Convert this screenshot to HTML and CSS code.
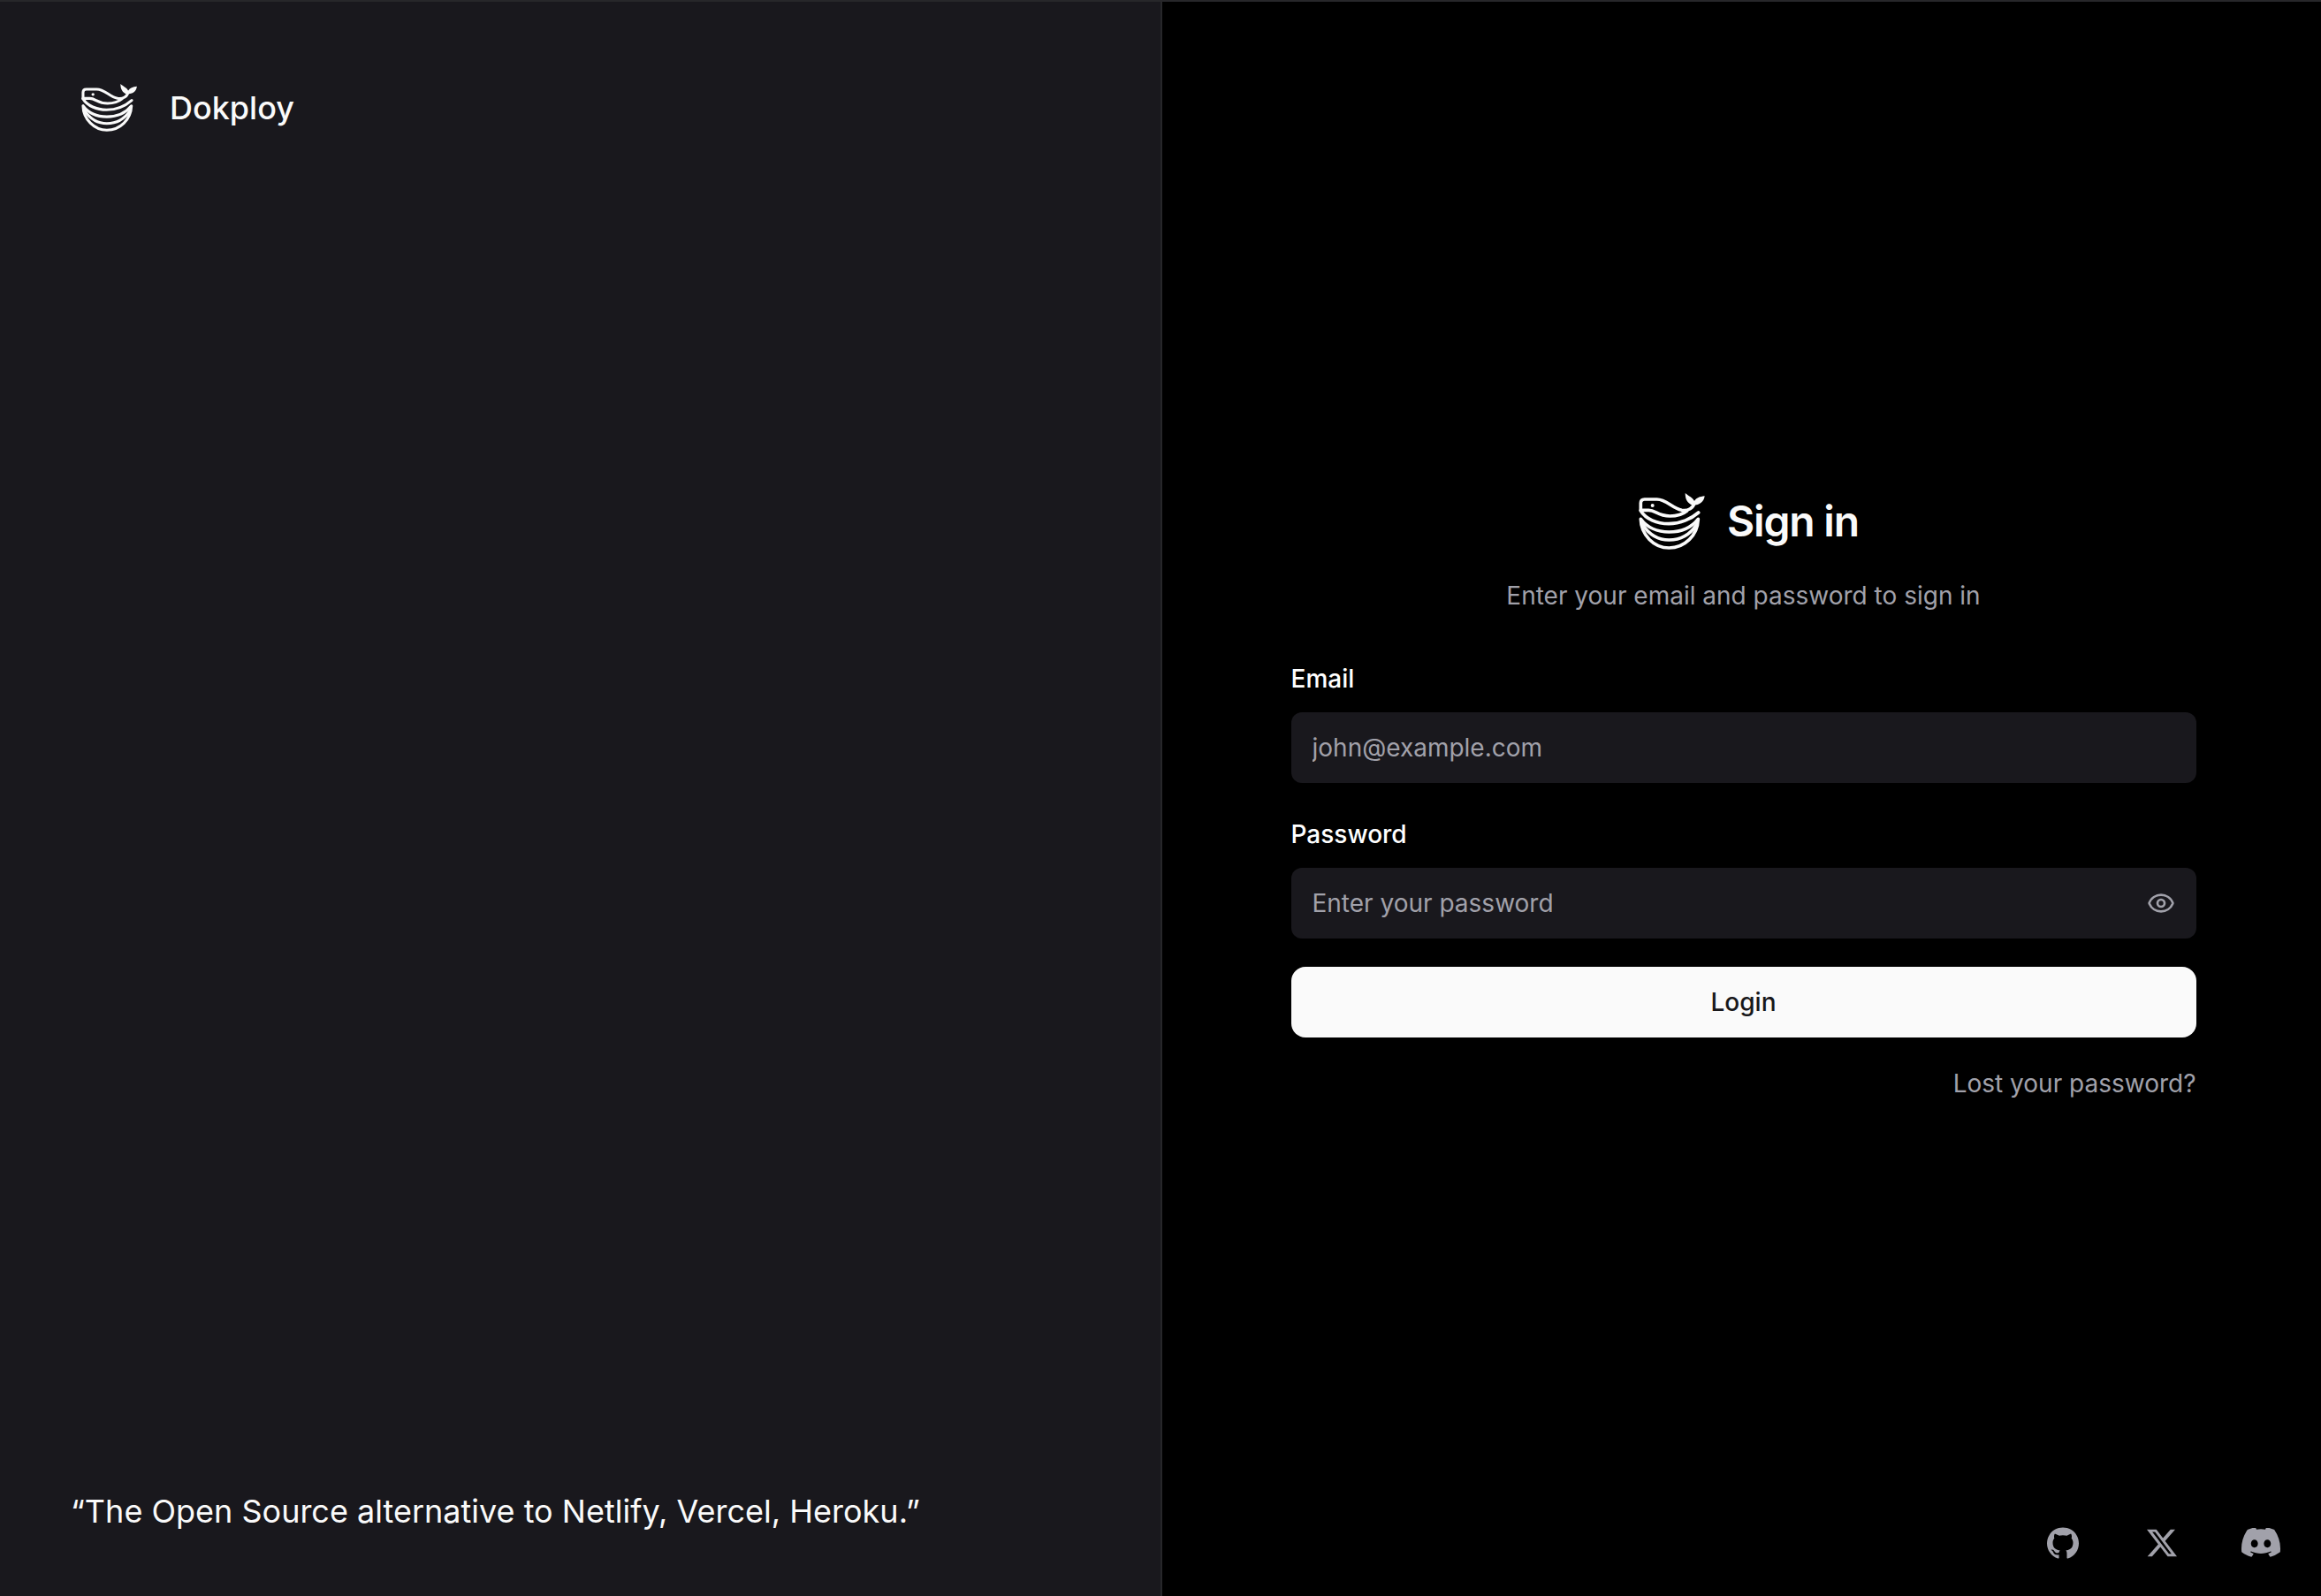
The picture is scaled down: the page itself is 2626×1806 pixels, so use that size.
FILE: index.html
```html
<!DOCTYPE html>
<html lang="en">
<head>
<meta charset="utf-8">
<meta name="viewport" content="width=device-width, initial-scale=1">
<title>Dokploy</title>
<link rel="stylesheet" href="styles.css">
</head>
<body>
<svg class="sprite" aria-hidden="true">
  <symbol id="whale" viewBox="0 0 228 192">
    <g fill="none" stroke="currentColor" stroke-width="11" stroke-linecap="round" stroke-linejoin="round">
      <path d="M7 58V34Q7 21 20 21H62C94 21 112 50 146 58C168 62 186 50 189 32"/>
      <path d="M7 58H34C58 58 64 78 106 78C134 78 152 70 164 60"/>
      <path d="M7 60C24 88 62 104 102 104C142 104 180 86 203 66"/>
      <path d="M7 88C8 142 52 186 103 186C156 186 200 144 202 88C178 118 142 132 103 132C64 132 28 116 7 88Z"/>
      <path d="M14 108C38 144 68 159 103 159C140 159 172 144 196 108"/>
    </g>
    <path fill="currentColor" d="M158 0C158 22 166 34 182 41C206 42 222 30 224 10C207 12 196 16 189 27C182 14 172 12 158 0Z"/>
    <circle cx="47" cy="42" r="6" fill="currentColor"/>
  </symbol>
</svg>
<div class="page">
  <aside class="brand-panel">
    <a class="brand" href="#">
      <svg class="brand-logo" aria-hidden="true"><use href="#whale"/></svg>
      <span>Dokploy</span>
    </a>
    <blockquote class="quote">“The Open Source alternative to Netlify, Vercel, Heroku.”</blockquote>
  </aside>
  <main class="auth-panel">
    <div class="auth">
      <h1 class="title">
        <svg class="title-logo" aria-hidden="true"><use href="#whale"/></svg>
        <span>Sign in</span>
      </h1>
      <p class="subtitle">Enter your email and password to sign in</p>
      <form class="form">
        <div class="field">
          <label for="email">Email</label>
          <input id="email" type="email" placeholder="john@example.com">
        </div>
        <div class="field">
          <label for="password">Password</label>
          <div class="password">
            <input id="password" type="password" placeholder="Enter your password">
            <button class="reveal" type="button" aria-label="Show password">
              <svg viewBox="0 0 24 24" fill="none" stroke="currentColor" stroke-width="2" stroke-linecap="round" stroke-linejoin="round"><path d="M2.062 12.348a1 1 0 0 1 0-.696 10.75 10.75 0 0 1 19.876 0 1 1 0 0 1 0 .696 10.75 10.75 0 0 1-19.876 0"/><circle cx="12" cy="12" r="3"/></svg>
            </button>
          </div>
        </div>
        <button class="submit" type="submit">Login</button>
      </form>
      <a class="lost" href="#">Lost your password?</a>
    </div>
    <nav class="social" aria-label="Social links">
      <a href="#" aria-label="GitHub"><svg class="github" viewBox="0 0 438.549 438.549"><path fill="currentColor" d="M409.132 114.573c-19.608-33.596-46.205-60.194-79.798-79.8C295.736 15.166 259.057 5.365 219.271 5.365c-39.781 0-76.472 9.804-110.063 29.408-33.596 19.605-60.192 46.204-79.8 79.8C9.803 148.168 0 184.854 0 224.63c0 47.78 13.94 90.745 41.827 128.906 27.884 38.164 63.906 64.572 108.063 79.227 5.14.954 8.945.283 11.419-1.996 2.475-2.282 3.711-5.14 3.711-8.562 0-.571-.049-5.708-.144-15.417a2549.81 2549.81 0 01-.144-25.406l-6.567 1.136c-4.187.767-9.469 1.092-15.846 1-6.374-.089-12.991-.757-19.842-1.999-6.854-1.231-13.229-4.086-19.13-8.559-5.898-4.473-10.085-10.328-12.56-17.556l-2.855-6.57c-1.903-4.374-4.899-9.233-8.992-14.559-4.093-5.331-8.232-8.945-12.419-10.848l-1.999-1.431c-1.332-.951-2.568-2.098-3.711-3.429-1.142-1.331-1.997-2.663-2.568-3.997-.572-1.335-.098-2.43 1.427-3.289s4.281-1.276 8.28-1.276l5.708.853c3.807.763 8.516 3.042 14.133 6.851 5.614 3.806 10.229 8.754 13.846 14.842 4.38 7.806 9.657 13.754 15.846 17.847 6.184 4.093 12.419 6.136 18.699 6.136 6.28 0 11.704-.476 16.274-1.423 4.565-.952 8.848-2.383 12.847-4.285 1.713-12.758 6.377-22.559 13.988-29.41-10.848-1.14-20.601-2.857-29.264-5.14-8.658-2.286-17.605-5.996-26.835-11.14-9.235-5.137-16.896-11.516-22.985-19.126-6.09-7.614-11.088-17.61-14.987-29.979-3.901-12.374-5.852-26.648-5.852-42.826 0-23.035 7.52-42.637 22.557-58.817-7.044-17.318-6.379-36.732 1.997-58.24 5.52-1.715 13.706-.428 24.554 3.853 10.85 4.283 18.794 7.952 23.84 10.994 5.046 3.041 9.089 5.618 12.135 7.708 17.705-4.947 35.976-7.421 54.818-7.421s37.117 2.474 54.823 7.421l10.849-6.849c7.419-4.57 16.18-8.758 26.262-12.565 10.088-3.805 17.802-4.853 23.134-3.138 8.562 21.509 9.325 40.922 2.279 58.24 15.036 16.18 22.559 35.787 22.559 58.817 0 16.178-1.958 30.497-5.853 42.966-3.9 12.471-8.941 22.457-15.125 29.979-6.191 7.521-13.901 13.85-23.131 18.986-9.232 5.14-18.182 8.85-26.84 11.136-8.662 2.286-18.415 4.004-29.263 5.146 9.894 8.562 14.842 22.077 14.842 40.539v60.237c0 3.422 1.19 6.279 3.572 8.562 2.379 2.279 6.136 2.95 11.276 1.995 44.163-14.653 80.185-41.062 108.068-79.226 27.88-38.161 41.825-81.126 41.825-128.906-.01-39.771-9.818-76.454-29.414-110.049z"/></svg></a>
      <a href="#" aria-label="X"><svg class="x" viewBox="0 0 24 22"><path fill="currentColor" d="M18.901.153h3.68l-8.04 9.19L24 21.846h-7.406l-5.8-7.584-6.638 7.584H.474l8.6-9.83L0 .154h7.594l5.243 6.932ZM17.61 19.644h2.039L6.486 2.24H4.298Z"/></svg></a>
      <a href="#" aria-label="Discord"><svg class="discord" viewBox="0 3.5 24 18"><path fill="currentColor" d="M20.317 4.37a19.79 19.79 0 0 0-4.885-1.515.074.074 0 0 0-.079.037c-.21.375-.444.864-.608 1.25a18.27 18.27 0 0 0-5.487 0 12.64 12.64 0 0 0-.617-1.25.077.077 0 0 0-.079-.037A19.736 19.736 0 0 0 3.677 4.37a.07.07 0 0 0-.032.027C.533 9.046-.32 13.58.099 18.057a.082.082 0 0 0 .031.057 19.9 19.9 0 0 0 5.993 3.03.078.078 0 0 0 .084-.028c.462-.63.874-1.295 1.226-1.994a.076.076 0 0 0-.041-.106 13.107 13.107 0 0 1-1.872-.892.077.077 0 0 1-.008-.128 10.2 10.2 0 0 0 .372-.292.074.074 0 0 1 .077-.01c3.928 1.793 8.18 1.793 12.062 0a.074.074 0 0 1 .078.01c.12.098.246.198.373.292a.077.077 0 0 1-.006.127 12.299 12.299 0 0 1-1.873.892.077.077 0 0 0-.041.107c.36.698.772 1.362 1.225 1.993a.076.076 0 0 0 .084.028 19.839 19.839 0 0 0 6.002-3.03.077.077 0 0 0 .032-.054c.5-5.177-.838-9.674-3.549-13.66a.061.061 0 0 0-.031-.03zM8.02 15.33c-1.183 0-2.157-1.085-2.157-2.419 0-1.333.956-2.419 2.157-2.419 1.21 0 2.176 1.096 2.157 2.42 0 1.333-.956 2.418-2.157 2.418zm7.975 0c-1.183 0-2.157-1.085-2.157-2.419 0-1.333.955-2.419 2.157-2.419 1.21 0 2.176 1.096 2.157 2.42 0 1.333-.946 2.418-2.157 2.418z"/></svg></a>
    </nav>
  </main>
</div>
</body>
</html>
```
FILE: styles.css
```css
* {
  box-sizing: border-box;
  margin: 0;
}

body {
  background: #000;
  color: #fafafa;
  font: 400 28px/40px Inter, "Liberation Sans", sans-serif;
}

a {
  color: inherit;
  text-decoration: none;
}

svg {
  display: block;
}

.sprite {
  position: absolute;
  width: 0;
  height: 0;
}

.page {
  display: grid;
  grid-template-columns: 1fr 1fr;
  min-height: 100vh;
  border-top: 2px solid #27272a;
}

.brand-panel {
  display: flex;
  flex-direction: column;
  justify-content: space-between;
  padding: 80px;
  background: #19181d;
  border-right: 2px solid #27272a;
  margin-right: -2px;
  font-size: 36px;
}

.brand {
  display: flex;
  align-items: center;
  align-self: flex-start;
  gap: 36px;
  padding-left: 12px;
  font-weight: 500;
  line-height: 80px;
}

.brand-logo {
  width: 64px;
  height: 54px;
}

.quote {
  line-height: 56px;
  margin-bottom: -12px;
}

.auth-panel {
  position: relative;
  display: flex;
  align-items: center;
  justify-content: center;
  padding: 0 0 4px 6px;
}

.auth {
  display: flex;
  flex-direction: column;
  width: 100%;
  max-width: 1024px;
}

.title {
  display: flex;
  align-items: center;
  justify-content: center;
  gap: 24px;
  padding-left: 12px;
  font-size: 48px;
  font-weight: 600;
  line-height: 64px;
  letter-spacing: -0.025em;
}

.title-logo {
  width: 76px;
  height: 64px;
}

.subtitle {
  margin: 32px 0 56px;
  color: #a1a1aa;
  text-align: center;
}

.form {
  display: flex;
  flex-direction: column;
}

.field {
  display: flex;
  flex-direction: column;
  gap: 20px;
}

.field + .field {
  margin-top: 40px;
}

label {
  color: #fff;
  font-weight: 500;
  line-height: 36px;
}

input {
  width: 100%;
  height: 80px;
  padding: 0 24px;
  border: 0;
  border-radius: 12px;
  background: #19181d;
  color: #fafafa;
  font: inherit;
}

input::placeholder {
  color: #a1a1aa;
  opacity: 1;
}

.password {
  position: relative;
}

.password input {
  padding-right: 80px;
}

.reveal {
  position: absolute;
  inset: 0 24px 0 auto;
  display: flex;
  align-items: center;
  padding: 0;
  border: 0;
  background: none;
  color: #a1a1aa;
}

.reveal svg {
  width: 32px;
  height: 32px;
}

.submit {
  height: 80px;
  margin: 32px 0;
  border: 0;
  border-radius: 16px;
  background: #fafafa;
  color: #18181b;
  font: inherit;
  font-weight: 500;
}

.lost {
  align-self: flex-end;
  color: #a1a1aa;
}

.social {
  position: absolute;
  right: 40px;
  bottom: 32px;
  display: flex;
  gap: 56px;
  color: #a1a1aa;
}

.social a {
  display: flex;
  align-items: center;
  justify-content: center;
  width: 56px;
  height: 56px;
}

.github {
  width: 36px;
  height: 36px;
}

.x {
  width: 34px;
  height: 32px;
}

.discord {
  width: 44px;
  height: 34px;
}
```
